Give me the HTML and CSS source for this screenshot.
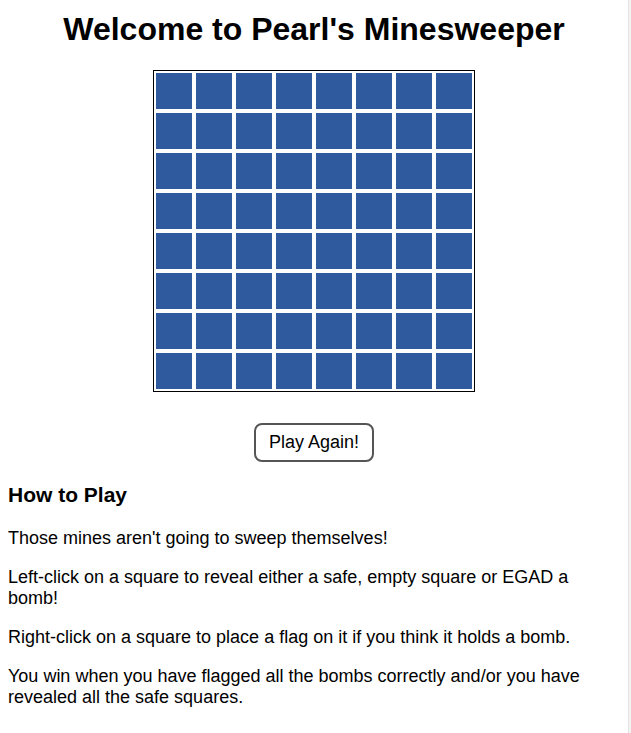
FILE: index.html
```html
<!DOCTYPE html>
<html lang="en">
<head>
<meta charset="utf-8">
<title>Pearl's Minesweeper</title>
<link rel="stylesheet" href="styles.css">
</head>
<body>
<h1 class="title">Welcome to Pearl's Minesweeper</h1>
<div class="board" id="board"></div>
<div class="actions"><button class="play-btn" type="button">Play Again!</button></div>
<h3 class="howto">How to Play</h3>
<p class="text">Those mines aren't going to sweep themselves!</p>
<p class="text">Left-click on a square to reveal either a safe, empty square or EGAD a bomb!</p>
<p class="text">Right-click on a square to place a flag on it if you think it holds a bomb.</p>
<p class="text">You win when you have flagged all the bombs correctly and/or you have revealed all the safe squares.</p>
<div class="scroll-edge"></div>
<script>
  var b = document.getElementById('board');
  for (var i = 0; i < 64; i++) {
    var c = document.createElement('div');
    c.className = 'cell';
    b.appendChild(c);
  }
</script>
</body>
</html>
```
FILE: styles.css
```css
html { background: #fff; }
body {
  margin: 8px 11px 8px 8px;
  font-family: "Liberation Sans", Arial, Helvetica, sans-serif;
  font-size: 18px;
  color: #000;
}
.title {
  margin: 3px 0 22px;
  font-size: 32px;
  font-weight: bold;
  text-align: center;
}
.board {
  margin: 0 auto;
  border: 1px solid #000;
  display: grid;
  grid-template-columns: repeat(8, 36px);
  grid-auto-rows: 36px;
  gap: 4px;
  padding: 2px;
  box-sizing: content-box;
  width: 316px;
}
.cell {
  background: #2f5a9e;
}
.actions {
  display: flex;
  justify-content: center;
  margin-top: 31px;
}
.play-btn {
  font-family: "Liberation Sans", Arial, Helvetica, sans-serif;
  font-size: 18px;
  line-height: normal;
  color: #000;
  background: #fff;
  border: 2px solid #555;
  border-radius: 8px;
  padding: 7px 12px;
  width: 120px;
  height: 39px;
  cursor: pointer;
}
.howto {
  font-size: 21px;
  font-weight: bold;
  margin: 21px 0;
}
.text {
  margin: 18px 0;
  line-height: normal;
}
.scroll-edge {
  position: fixed;
  top: 0;
  right: 0;
  bottom: 0;
  width: 2px;
  background: #f3f3f3;
  border-left: 1px solid #e4e4e4;
}
```
